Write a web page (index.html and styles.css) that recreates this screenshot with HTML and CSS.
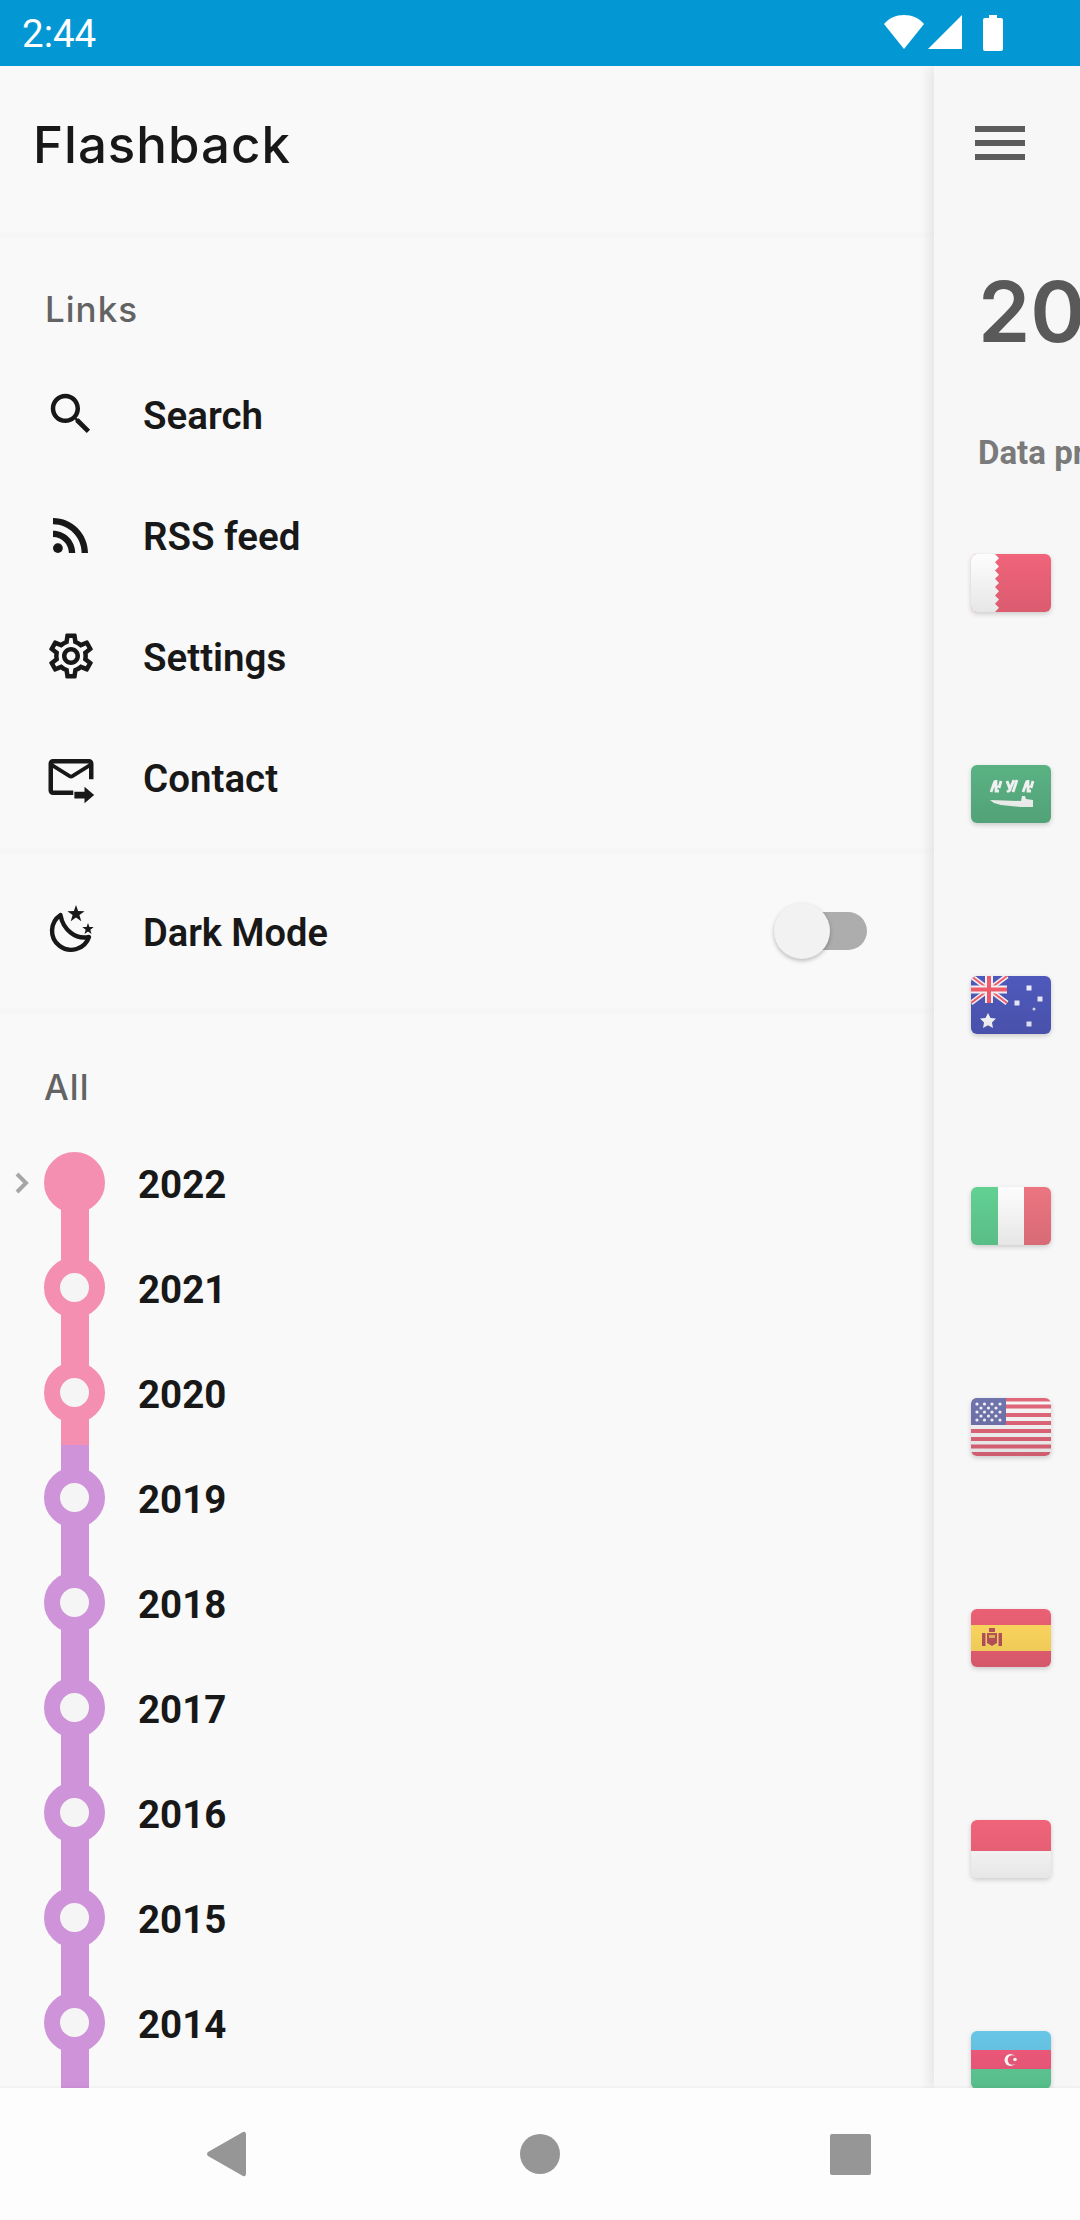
FILE: index.html
```html
<!DOCTYPE html>
<html lang="en">
<head>
  <meta charset="UTF-8">
  <meta name="viewport" content="width=device-width, initial-scale=1.0">
  <title>Flashback</title>
  <link rel="stylesheet" href="styles.css">
</head>
<body>
  <div class="status-bar">
    <span class="clock">2:44</span>
    <div class="status-icons">
      <svg width="42" height="34" viewBox="0 0 42 34"><path d="M21 34 L1 9 C6 3 13 0 21 0 C29 0 36 3 41 9 Z" fill="#fff"/></svg>
      <svg width="34" height="34" viewBox="0 0 34 34"><path d="M34 0 V34 H0 Z" fill="#fff"/></svg>
      <svg class="battery" width="20" height="36" viewBox="0 0 20 36"><path d="M6 0 H14 V3 H18 Q20 3 20 5 V34 Q20 36 18 36 H2 Q0 36 0 34 V5 Q0 3 2 3 H6 Z" fill="#fff"/></svg>
    </div>
  </div>

  <div class="main">
    <nav class="drawer">
      <div class="drawer-head">Flashback</div>

      <section class="links">
        <h4 class="section-title">Links</h4>
        <a class="link-row">
          <svg class="icon" viewBox="0 0 24 24"><path d="M15.5 14h-.79l-.28-.27C15.41 12.59 16 11.11 16 9.5 16 5.91 13.09 3 9.5 3S3 5.91 3 9.5 5.91 16 9.5 16c1.61 0 3.09-.59 4.23-1.57l.27.28v.79l5 4.99L20.49 19l-4.99-5zm-6 0C7.01 14 5 11.99 5 9.5S7.01 5 9.5 5 14 7.01 14 9.5 11.99 14 9.5 14z"/></svg>
          <span>Search</span>
        </a>
        <a class="link-row">
          <svg class="icon" viewBox="0 0 24 24"><circle cx="6.18" cy="17.82" r="2.18"/><path d="M4 4.44v2.83c7.03 0 12.73 5.7 12.73 12.73h2.83c0-8.59-6.97-15.56-15.56-15.56zm0 5.66v2.83c3.9 0 7.07 3.17 7.07 7.07h2.83c0-5.47-4.43-9.9-9.9-9.9z"/></svg>
          <span>RSS feed</span>
        </a>
        <a class="link-row">
          <svg class="icon" viewBox="0 0 24 24"><path d="M19.43 12.98c.04-.32.07-.64.07-.98 0-.34-.03-.66-.07-.98l2.11-1.65c.19-.15.24-.42.12-.64l-2-3.46c-.09-.16-.26-.25-.44-.25-.06 0-.12.01-.17.03l-2.49 1c-.52-.4-1.08-.73-1.69-.98l-.38-2.65C14.46 2.18 14.25 2 14 2h-4c-.25 0-.46.18-.49.42l-.38 2.65c-.61.25-1.17.59-1.69.98l-2.49-1c-.06-.02-.12-.03-.18-.03-.17 0-.34.09-.43.25l-2 3.46c-.13.22-.07.49.12.64l2.11 1.65c-.04.32-.07.65-.07.98 0 .33.03.66.07.98l-2.11 1.65c-.19.15-.24.42-.12.64l2 3.46c.09.16.26.25.44.25.06 0 .12-.01.17-.03l2.49-1c.52.4 1.08.73 1.69.98l.38 2.65c.03.24.24.42.49.42h4c.25 0 .46-.18.49-.42l.38-2.65c.61-.25 1.17-.59 1.69-.98l2.49 1c.06.02.12.03.18.03.17 0 .34-.09.43-.25l2-3.46c.12-.22.07-.49-.12-.64l-2.11-1.65zm-1.98-1.71c.04.31.05.52.05.73 0 .21-.02.43-.05.73l-.14 1.13.89.7 1.08.84-.7 1.21-1.27-.51-1.04-.42-.9.68c-.43.32-.84.56-1.25.73l-1.06.43-.16 1.13-.2 1.35h-1.4l-.19-1.35-.16-1.13-1.06-.43c-.43-.18-.83-.41-1.23-.71l-.91-.7-1.06.43-1.27.51-.7-1.21 1.08-.84.89-.7-.14-1.13c-.03-.31-.05-.54-.05-.74s.02-.43.05-.73l.14-1.13-.89-.7-1.08-.84.7-1.21 1.27.51 1.04.42.9-.68c.43-.32.84-.56 1.25-.73l1.06-.43.16-1.13.2-1.35h1.39l.19 1.35.16 1.13 1.06.43c.43.18.83.41 1.23.71l.91.7 1.06-.43 1.27-.51.7 1.21-1.07.85-.89.7.14 1.13zM12 8c-2.21 0-4 1.79-4 4s1.79 4 4 4 4-1.79 4-4-1.79-4-4-4zm0 6c-1.1 0-2-.9-2-2s.9-2 2-2 2 .9 2 2-.9 2-2 2z"/></svg>
          <span>Settings</span>
        </a>
        <a class="link-row">
          <svg class="icon" viewBox="0 0 24 24"><path d="M20 4H4c-1.1 0-1.99.9-1.99 2L2 18c0 1.1.9 2 2 2h9v-2H4V8l6.94 4.34c.65.41 1.47.41 2.12 0L20 8v5h2V6c0-1.1-.9-2-2-2zm-8 7L4 6h16l-8 5z"/><path d="M18 16.300l4.300 3.700-4.300 3.700v-2.200h-4.500v-3h4.500z"/></svg>
          <span>Contact</span>
        </a>
      </section>

      <section class="dark-mode">
        <svg class="icon" viewBox="0 0 54 54">
          <path d="M16.500 11 A19 19 0 1 0 45 33 C32 36 19 26 16.500 11 Z" fill="none" stroke="#181818" stroke-width="4.400" stroke-linejoin="round"/>
          <path d="M32 1l2.100 6.100 6.500.1-5.200 3.900 1.900 6.200-5.300-3.700-5.300 3.700 1.900-6.200-5.200-3.900 6.500-.1z"/>
          <path d="M44 19l1.400 4.100 4.300 0-3.400 2.600 1.200 4.200-3.500-2.500-3.500 2.500 1.200-4.200-3.400-2.600 4.300 0z"/>
        </svg>
        <span class="dark-label">Dark Mode</span>
        <div class="switch"><div class="switch-thumb"></div></div>
      </section>

      <section class="all">
        <h4 class="section-title">All</h4>
        <div class="timeline">
          <div class="year pink first">
            <svg class="chevron" width="14" height="22" viewBox="0 0 14 22"><path d="M2 2l9 9-9 9" fill="none" stroke="#a6a6a6" stroke-width="4"/></svg>
            <div class="track"><div class="dot solid"></div></div>
            <span>2022</span>
          </div>
          <div class="year pink"><div class="track"><div class="dot"></div></div><span>2021</span></div>
          <div class="year pink"><div class="track"><div class="dot"></div></div><span>2020</span></div>
          <div class="year purple"><div class="track"><div class="dot"></div></div><span>2019</span></div>
          <div class="year purple"><div class="track"><div class="dot"></div></div><span>2018</span></div>
          <div class="year purple"><div class="track"><div class="dot"></div></div><span>2017</span></div>
          <div class="year purple"><div class="track"><div class="dot"></div></div><span>2016</span></div>
          <div class="year purple"><div class="track"><div class="dot"></div></div><span>2015</span></div>
          <div class="year purple"><div class="track"><div class="dot"></div></div><span>2014</span></div>
          <div class="year-tail"></div>
        </div>
      </section>
    </nav>

    <div class="panel">
      <div class="panel-head">
        <svg width="50" height="34" viewBox="0 0 50 34"><path d="M0 0h50v6H0zM0 14h50v6H0zM0 28h50v6H0z" fill="#5c5c5c"/></svg>
      </div>
      <div class="panel-year">2022</div>
      <div class="panel-note">Data provided</div>

      <div class="flags">
        <!-- Bahrain -->
        <div class="flag">
          <svg viewBox="0 0 80 58">
            <rect width="80" height="58" fill="#f0647a"/>
            <path d="M0 0h24l4 4.140-4 4.140 4 4.140-4 4.140 4 4.140-4 4.140 4 4.140-4 4.140 4 4.140-4 4.140 4 4.140-4 4.140 4 4.140-4 4.140H0z" fill="#fdfdfd"/>
          </svg>
        </div>
        <!-- Saudi Arabia -->
        <div class="flag">
          <svg viewBox="0 0 80 58">
            <rect width="80" height="58" fill="#5ab283"/>
            <path d="M20 27l4-11M25 15v11h3M30 16l-2 7M21 20l6 2M36 16l3 8 4-9M46 15l-4 12M36 27l4-3M52 27l4-11M57 15v11h3M62 16l-2 7M53 20l6 2" fill="none" stroke="#f8f8f8" stroke-width="2.800"/>
            <path d="M19 35l31 1 1-5h3l1 3 7 1v7H50l-20-2-7-2z" fill="#f8f8f8"/>
          </svg>
        </div>
        <!-- Australia -->
        <div class="flag">
          <svg viewBox="0 0 80 58">
            <rect width="80" height="58" fill="#4f59bb"/>
            <path d="M0 0l36 27M36 0L0 27" stroke="#f4f4f8" stroke-width="5"/>
            <path d="M0 0l36 27M36 0L0 27" stroke="#f55c6c" stroke-width="2"/>
            <path d="M14 0h8v27h-8zM0 9.500h36v8H0z" fill="#f4f4f8"/>
            <path d="M16 0h4v27h-4zM0 11.500h36v4H0z" fill="#f55c6c"/>
            <path d="M17 37l2.500 5 5.500.5-4 4 1 5.500-5-2.700-5 2.700 1-5.500-4-4 5.500-.5z" fill="#fff"/>
            <path d="M55.500 9.500h5v5h-5zM66.500 20.500h5v5h-5zM43.500 24.500h5v5h-5zM55.500 45.500h5v5h-5z" fill="#eef"/>
            <circle cx="63" cy="33" r="1.500" fill="#dde"/>
          </svg>
        </div>
        <!-- Italy -->
        <div class="flag">
          <svg viewBox="0 0 80 58">
            <rect width="27" height="58" fill="#62d093"/>
            <rect x="27" width="27" height="58" fill="#fdfdfd"/>
            <rect x="53" width="27" height="58" fill="#ec7581"/>
          </svg>
        </div>
        <!-- United States -->
        <div class="flag">
          <svg viewBox="0 0 80 58">
            <rect width="80" height="58" fill="#f8f8f8"/>
            <path d="M0 0h80v3.500H0zM0 6.500h80v4H0zM0 15h80v4H0zM0 23h80v4H0zM0 31h80v4H0zM0 39h80v4H0zM0 46.500h80v4H0zM0 54h80v4H0z" fill="#e2677a"/>
            <rect width="35" height="27" fill="#7074ad"/>
            <g fill="#f4f4f4">
              <circle cx="6" cy="6" r="1.600"/><circle cx="13.500" cy="6" r="1.600"/><circle cx="21" cy="6" r="1.600"/><circle cx="29" cy="6" r="1.600"/>
              <circle cx="10" cy="10" r="1.600"/><circle cx="17.500" cy="10" r="1.600"/><circle cx="25" cy="10" r="1.600"/>
              <circle cx="6" cy="14" r="1.600"/><circle cx="13.500" cy="14" r="1.600"/><circle cx="21" cy="14" r="1.600"/><circle cx="29" cy="14" r="1.600"/>
              <circle cx="10" cy="18" r="1.600"/><circle cx="17.500" cy="18" r="1.600"/><circle cx="25" cy="18" r="1.600"/>
              <circle cx="6" cy="22" r="1.600"/><circle cx="13.500" cy="22" r="1.600"/><circle cx="21" cy="22" r="1.600"/><circle cx="29" cy="22" r="1.600"/>
            </g>
          </svg>
        </div>
        <!-- Spain -->
        <div class="flag">
          <svg viewBox="0 0 80 58">
            <rect width="80" height="58" fill="#ea6074"/>
            <rect y="16" width="80" height="26" fill="#ffd85e"/>
            <path d="M11 24h3.500v13H11zM27.500 24H31v13h-3.500zM16 24h10v10l-5 3-5-3zM18 19h6v4h-6z" fill="#b8525e"/>
            <path d="M18 26h6v3h-6z" fill="#e8b457"/>
          </svg>
        </div>
        <!-- Indonesia -->
        <div class="flag">
          <svg viewBox="0 0 80 58">
            <rect width="80" height="31" fill="#f0647a"/>
            <rect y="31" width="80" height="27" fill="#fdfdfd"/>
          </svg>
        </div>
        <!-- Azerbaijan -->
        <div class="flag">
          <svg viewBox="0 0 80 58">
            <rect width="80" height="20" fill="#68c6e6"/>
            <rect y="19" width="80" height="20" fill="#f25a7c"/>
            <rect y="38" width="80" height="20" fill="#60ce98"/>
            <circle cx="39.500" cy="29" r="6" fill="#fff"/>
            <circle cx="41.500" cy="29" r="4.800" fill="#ee5a7c"/>
            <circle cx="44" cy="28.500" r="1.800" fill="#fff"/>
          </svg>
        </div>
      </div>
    </div>
  </div>

  <div class="nav-bar">
    <svg width="40" height="46" viewBox="0 0 40 46"><path d="M37 1 Q40 0 40 4 V42 Q40 46 37 45 L2 25 Q0 23 2 21 Z" fill="#969696"/></svg>
    <div class="nav-circle"></div>
    <div class="nav-square"></div>
  </div>
</body>
</html>
```

FILE: styles.css
```css
* {
  box-sizing: border-box;
}

body {
  display: flex;
  flex-direction: column;
  width: 1080px;
  height: 2220px;
  margin: 0;
  overflow: hidden;
  font-family: Roboto, sans-serif;
  background-color: #f7f7f7;
  color: #181818;
}

.status-bar {
  display: flex;
  align-items: center;
  justify-content: space-between;
  height: 66px;
  padding: 0 77px 0 22px;
  background-color: #0398d4;
  color: #fff;
}

.clock {
  font-size: 38.5px;
}

.status-icons {
  display: flex;
  align-items: flex-start;
  gap: 3px;
}

.battery {
  margin-left: 18px;
}

.main {
  display: flex;
  flex: 1;
  min-height: 0;
  overflow: hidden;
}

.drawer {
  display: flex;
  flex-direction: column;
  width: 934px;
  flex-shrink: 0;
  background-color: #f9f9f9;
}

.drawer-head {
  height: 172px;
  padding: 49px 0 0 33px;
  font-family: Inter, sans-serif;
  font-size: 51px;
  font-weight: 500;
  letter-spacing: 1px;
  line-height: 60px;
  border-bottom: 6px solid #f7f7f7;
}

.section-title {
  margin: 0;
  font-family: Inter, sans-serif;
  font-size: 35px;
  font-weight: 500;
  letter-spacing: 1px;
  line-height: 40px;
  color: #636363;
}

.links {
  height: 616px;
  padding: 51px 0 0 45px;
  border-bottom: 6px solid #f7f7f7;
}

.links .section-title {
  margin-bottom: 26px;
}

.link-row {
  display: flex;
  align-items: center;
  gap: 45px;
  height: 121px;
  margin-left: -1px;
  font-size: 38.5px;
  font-weight: 600;
}

.icon {
  width: 54px;
  height: 54px;
  flex-shrink: 0;
  margin-bottom: 4px;
  fill: #181818;
}

.dark-mode {
  display: flex;
  align-items: center;
  height: 160px;
  padding: 4px 0 0 44px;
  font-size: 38px;
  font-weight: 600;
  border-bottom: 6px solid #f7f7f7;
}

.dark-label {
  margin-left: 45px;
}

.switch {
  position: relative;
  width: 92px;
  height: 38px;
  margin-left: auto;
  margin-right: 67px;
  margin-bottom: 4px;
  border-radius: 19px;
  background-color: #adadad;
}

.switch-thumb {
  position: absolute;
  left: -1px;
  top: -9px;
  width: 56px;
  height: 56px;
  border-radius: 50%;
  background-color: #f2f2f2;
  box-shadow: 0 2px 4px rgba(0, 0, 0, 0.25);
}

.all {
  display: flex;
  flex-direction: column;
  flex: 1;
  padding-top: 53px;
}

.all .section-title {
  padding-left: 44px;
  margin-bottom: 23px;
}

.timeline {
  display: flex;
  flex-direction: column;
  flex: 1;
}

.year {
  display: flex;
  align-items: center;
  height: 105px;
  font-size: 38.5px;
  font-weight: 700;
  position: relative;
}

.year span {
  margin: 4px 0 0 49px;
}

.chevron {
  position: absolute;
  left: 15px;
  top: 42px;
}

.track {
  position: relative;
  width: 28px;
  height: 100%;
  margin-left: 61px;
}

.first .track {
  height: 52px;
  align-self: flex-end;
}

.pink .track {
  background-color: #f48fb1;
}

.purple .track,
.year-tail {
  background-color: #ce93d8;
}

.year-tail {
  flex: 1;
  width: 28px;
  margin-left: 61px;
}

.dot {
  position: absolute;
  left: -17px;
  top: 22px;
  width: 61px;
  height: 61px;
  border: 16.5px solid;
  border-radius: 50%;
  background-color: #f5f5f5;
}

.first .dot {
  top: -31px;
}

.pink .dot {
  border-color: #f48fb1;
}

.purple .dot {
  border-color: #ce93d8;
}

.dot.solid {
  background-color: #f48fb1;
}

.panel {
  flex: 1;
  min-width: 0;
  overflow: hidden;
  padding-left: 44px;
  background-color: #f7f7f7;
  box-shadow: -6px 0 10px rgba(0, 0, 0, 0.07);
  position: relative;
  z-index: 1;
}

.panel-head {
  height: 154px;
  margin-left: -3px;
  padding-top: 60px;
}

.panel-year {
  margin-top: 44px;
  font-family: Inter, sans-serif;
  font-size: 84px;
  font-weight: 600;
  line-height: 96px;
  color: #595959;
  white-space: nowrap;
}

.panel-note {
  margin-top: 73px;
  font-size: 33px;
  font-weight: 700;
  line-height: 40px;
  color: #7a7a7a;
  white-space: nowrap;
}

.flags {
  display: flex;
  flex-direction: column;
  gap: 153px;
  margin-top: 81px;
}

.flag {
  position: relative;
  width: 80px;
  height: 58px;
  flex-shrink: 0;
  margin-left: -7px;
  border-radius: 6px;
  overflow: hidden;
  box-shadow: 0 2px 5px rgba(0, 0, 0, 0.18);
}

.flag svg {
  display: block;
  width: 80px;
  height: 58px;
}

/* all the flags fade a bit darker to the bottom */
.flag::after {
  content: "";
  position: absolute;
  inset: 0;
  background: linear-gradient(rgba(0, 0, 0, 0), rgba(0, 0, 0, 0.09));
}

.nav-bar {
  display: flex;
  align-items: center;
  justify-content: space-between;
  height: 132px;
  padding: 0 209px 0 206px;
  background-color: #fdfdfd;
  box-shadow: 0 -1px 3px rgba(0, 0, 0, 0.05);
  position: relative;
  z-index: 2;
}

.nav-circle {
  width: 40px;
  height: 40px;
  margin-left: 4px;
  border-radius: 50%;
  background-color: #969696;
}

.nav-square {
  width: 41px;
  height: 41px;
  border-radius: 2px;
  background-color: #969696;
}
```
